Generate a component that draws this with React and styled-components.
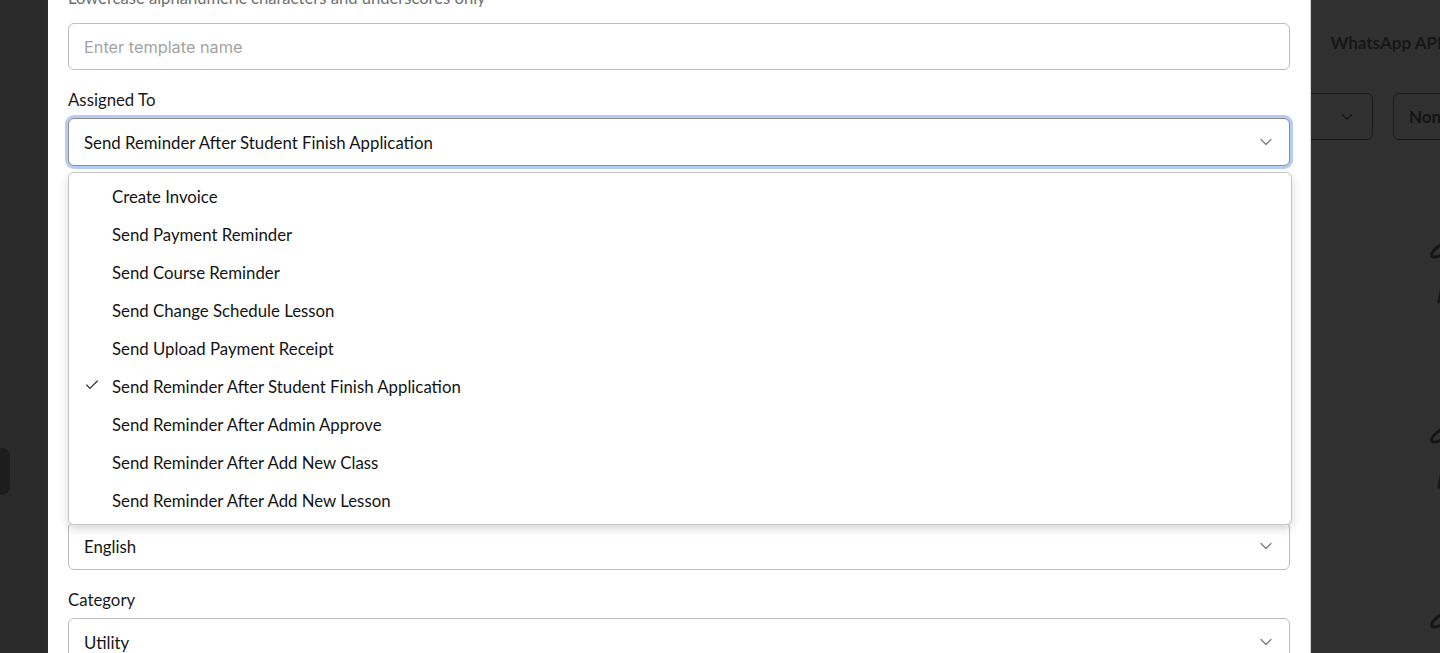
import { useLayoutEffect, useRef } from 'react'
import styled, { createGlobalStyle } from 'styled-components'
import { Check, ChevronDown, X } from 'lucide-react'

const GlobalStyle = createGlobalStyle`
  html, body {
    margin: 0;
    height: 100%;
    overflow: hidden;
  }
  body {
    font-family: 'Lato', 'Noto Sans', sans-serif;
    background: #fff;
  }
  * {
    box-sizing: border-box;
  }
`

// ---------- page behind the modal ----------

const Page = styled.div`
  display: flex;
  width: 100vw;
  height: 100vh;
  overflow: hidden;
`
const Sidebar = styled.aside`
  flex-shrink: 0;
  width: 48px;
  background: #dcdcdc;
  display: flex;
  flex-direction: column;
  padding-top: 448px;
  border-right: 1px dotted #ececec;
`
const SideTab = styled.div`
  width: 10px;
  height: 47px;
  border-radius: 0 8px 8px 0;
  background: #9a9a9a;
`
const Main = styled.main`
  flex-shrink: 0;
  width: 1452px;
  padding: 0 24px;
  background: #fff;
`
const TabBar = styled.div`
  height: 84px;
  display: flex;
  align-items: center;
  justify-content: flex-end;
  gap: 8px;
  padding-right: 20px;
`
const Tab = styled.div`
  padding: 0 14px;
  font-size: 17px;
  font-weight: 700;
  color: ${p => (p.$active ? '#7a7a7a' : '#9a9a9a')};
  white-space: nowrap;
`
const FilterRow = styled.div`
  margin-top: 9px;
  display: flex;
  justify-content: flex-end;
  gap: 20px;
  height: 47px;
`
const FilterSelect = styled.div`
  width: 220px;
  border: 1px solid #8d8d8d;
  border-radius: 6px;
  display: flex;
  align-items: center;
  justify-content: flex-end;
  padding-right: 16px;
  color: #666;
`
const FilterButton = styled.div`
  width: 83px;
  border: 1px solid #8d8d8d;
  border-radius: 6px;
  display: flex;
  align-items: center;
  padding-left: 15px;
  font-size: 17px;
  font-weight: 700;
  color: #6a6a6a;
  white-space: nowrap;
  overflow: hidden;
`
const List = styled.div`
  margin-top: 12px;
  display: flex;
  flex-direction: column;
`
const ListRow = styled.div`
  height: 185px;
  display: flex;
  align-items: flex-start;
  justify-content: flex-end;
  padding-top: 88px;
`
const Scribble = () => (
  <svg width="48" height="70" viewBox="0 0 48 70" fill="none" stroke="#6e6e6e" strokeWidth="3" strokeLinecap="round">
    <path d="M16 3 C 6 8, 1 15, 5 17 C 9 18, 14 14, 22 13" />
    <path d="M14 47 L 11 62" />
  </svg>
)

// ---------- modal ----------

const Overlay = styled.div`
  position: fixed;
  inset: 0;
  background: rgba(0, 0, 0, 0.81);
  display: flex;
  padding-left: 48px;
`
const Modal = styled.div`
  position: relative;
  width: 1263px;
  height: 100%;
  background: #fff;
  overflow-y: auto;
  scrollbar-width: none;
  border-right: 1px solid #d4d4d4;
  &::-webkit-scrollbar {
    display: none;
  }
`
const Header = styled.div`
  display: flex;
  align-items: center;
  justify-content: space-between;
  padding: 20px 20px 16px;
  border-bottom: 1px solid #e5e5e5;
`
const Title = styled.h2`
  margin: 0;
  font-size: 20px;
  font-weight: 700;
  color: #1d1d1d;
`
const Form = styled.div`
  display: flex;
  flex-direction: column;
  gap: 20px;
  padding: 20px 20px 40px;
`
const Field = styled.div`
  display: flex;
  flex-direction: column;
`
const Label = styled.label`
  font-size: 16.8px;
  line-height: 20px;
  color: #1a1a1a;
  margin-bottom: ${p => (p.$hint ? '2px' : '8px')};
`
const Hint = styled.div`
  font-size: 16.6px;
  line-height: 20px;
  color: #6f6f6f;
  margin-bottom: ${p => (p.$tight ? '6px' : '15px')};
`
const TextInput = styled.input`
  height: 47px;
  border: 1px solid #bdbdbd;
  border-radius: 6px;
  padding: 0 15px;
  font-family: 'Inter', 'Noto Sans', sans-serif;
  font-size: 16.3px;
  color: #1d1d1d;
  outline: none;
  &::placeholder {
    color: #a3a3a3;
  }
`
const TextArea = styled.textarea`
  height: 140px;
  border: 1px solid #bdbdbd;
  border-radius: 6px;
  padding: 12px 15px;
  font-family: 'Inter', 'Noto Sans', sans-serif;
  font-size: 16px;
  resize: none;
`
const SelectWrap = styled.div`
  position: relative;
`
const SelectBox = styled.div`
  height: 48px;
  border: 1px solid ${p => (p.$focused ? '#8e8e8e' : '#bdbdbd')};
  border-radius: 6px;
  box-shadow: ${p => (p.$focused ? '0 0 0 3px rgba(104, 155, 232, 0.5)' : 'none')};
  background: #fff;
  display: flex;
  align-items: center;
  justify-content: space-between;
  padding: 0 13px 0 15px;
  font-size: 16.8px;
  color: #141414;
  svg {
    color: #7c7c7c;
  }
`
const Dropdown = styled.ul`
  position: absolute;
  top: calc(100% + 6px);
  left: 0;
  right: -2px;
  z-index: 10;
  margin: 0;
  padding: 4px 0 5px;
  list-style: none;
  background: #fff;
  border: 1px solid #c6c6c6;
  border-radius: 6px;
  box-shadow: 0 4px 10px rgba(0, 0, 0, 0.16);
`
const Option = styled.li`
  position: relative;
  height: 38px;
  display: flex;
  align-items: center;
  padding-left: 43px;
  font-size: 16.8px;
  color: #141414;
`
const CheckMark = styled.span`
  position: absolute;
  left: 15px;
  top: 10px;
  display: flex;
  color: #2a2a2a;
`

const options = [
  'Create Invoice',
  'Send Payment Reminder',
  'Send Course Reminder',
  'Send Change Schedule Lesson',
  'Send Upload Payment Receipt',
  'Send Reminder After Student Finish Application',
  'Send Reminder After Admin Approve',
  'Send Reminder After Add New Class',
  'Send Reminder After Add New Lesson',
]
const selected = 'Send Reminder After Student Finish Application'

const Select = ({ value, focused, children }) => (
  <SelectWrap>
    <SelectBox $focused={focused}>
      <span>{value}</span>
      <ChevronDown size={20} strokeWidth={1.5} />
    </SelectBox>
    {children}
  </SelectWrap>
)

export default function App() {
  const modalRef = useRef(null)
  const hintRef = useRef(null)

  // the modal is shown scrolled down so the name hint sits at the top edge
  useLayoutEffect(() => {
    if (modalRef.current && hintRef.current) {
      modalRef.current.scrollTop = hintRef.current.offsetTop + 12
    }
  }, [])

  return (
    <>
      <GlobalStyle />
      <Page>
        <Sidebar>
          <SideTab />
        </Sidebar>
        <Main>
          <TabBar>
            <Tab>Email</Tab>
            <Tab>SMS</Tab>
            <Tab $active>WhatsApp API</Tab>
          </TabBar>
          <FilterRow>
            <FilterSelect>
              <ChevronDown size={18} strokeWidth={1.5} />
            </FilterSelect>
            <FilterButton>None</FilterButton>
          </FilterRow>
          <List>
            <ListRow><Scribble /></ListRow>
            <ListRow><Scribble /></ListRow>
            <ListRow><Scribble /></ListRow>
          </List>
        </Main>
      </Page>

      <Overlay>
        <Modal ref={modalRef}>
          <Header>
            <Title>Create WhatsApp Template</Title>
            <X size={20} color="#666" />
          </Header>
          <Form>
            <Field>
              <Label $hint>Template Name</Label>
              <Hint ref={hintRef}>Lowercase alphanumeric characters and underscores only</Hint>
              <TextInput placeholder="Enter template name" />
            </Field>
            <Field>
              <Label>Assigned To</Label>
              <Select value={selected} focused>
                <Dropdown>
                  {options.map(o => (
                    <Option key={o}>
                      {o === selected && (
                        <CheckMark>
                          <Check size={16} strokeWidth={1.75} />
                        </CheckMark>
                      )}
                      {o}
                    </Option>
                  ))}
                </Dropdown>
              </Select>
            </Field>
            <Field>
              <Label>Channel</Label>
              <Select value="WhatsApp API" />
            </Field>
            <Field>
              <Label $hint>Sender Number</Label>
              <Hint $tight>Number registered in WhatsApp Business</Hint>
              <Select value="+62 812 0000 0000" />
            </Field>
            <Field>
              <Label>Header Type</Label>
              <Select value="None" />
            </Field>
            <Field>
              <Label>Language</Label>
              <Select value="English" />
            </Field>
            <Field>
              <Label>Category</Label>
              <Select value="Utility" />
            </Field>
            <Field>
              <Label>Body</Label>
              <TextArea placeholder="Enter message body" />
            </Field>
            <Field>
              <Label>Footer</Label>
              <TextInput placeholder="Enter footer text" />
            </Field>
          </Form>
        </Modal>
      </Overlay>
    </>
  )
}
